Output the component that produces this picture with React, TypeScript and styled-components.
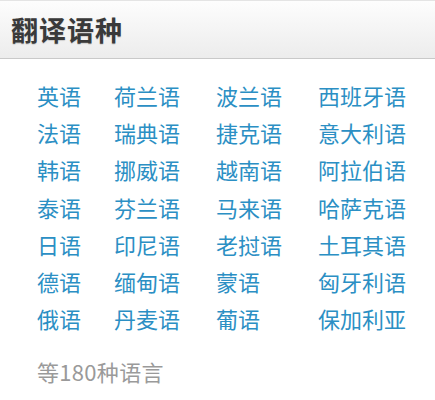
import React from "react";
import styled, { createGlobalStyle } from "styled-components";

const Global = createGlobalStyle`
  html, body { margin: 0; padding: 0; background: #fff; }
  body { font-family: "Noto Sans CJK SC", "Noto Sans", sans-serif; }
`;

const Page = styled.div`
  width: 435px;
  height: 400px;
  background: #fff;
  overflow: hidden;
`;

const Header = styled.div`
  height: 59px;
  box-sizing: border-box;
  display: flex;
  align-items: center;
  padding-left: 11px;
  background: linear-gradient(#fdfdfd, #ececec);
  border-top: 1px solid #e4e4e4;
  border-bottom: 1px solid #c9c9c9;
`;

const Title = styled.h1`
  margin: 0;
  font-size: 27px;
  font-weight: 700;
  color: #3a3a3a;
  letter-spacing: 1px;
  text-shadow: 0 1px 1px rgba(0,0,0,0.15);
`;

const Body = styled.div`
  padding: 17px 0 0 37px;
`;

const Grid = styled.div`
  display: grid;
  grid-template-columns: 77px 102px 102px auto;
  grid-auto-rows: 37.3px;
  align-items: center;
`;

const Lang = styled.span`
  font-size: 22px;
  color: #2b8fc4;
  line-height: 1;
  white-space: nowrap;
`;

const Footer = styled.div`
  margin-top: 16px;
  font-size: 22px;
  line-height: 37px;
  color: #9a9a9a;
  letter-spacing: 0.3px;
`;

const langs = [
  "英语", "荷兰语", "波兰语", "西班牙语",
  "法语", "瑞典语", "捷克语", "意大利语",
  "韩语", "挪威语", "越南语", "阿拉伯语",
  "泰语", "芬兰语", "马来语", "哈萨克语",
  "日语", "印尼语", "老挝语", "土耳其语",
  "德语", "缅甸语", "蒙语", "匈牙利语",
  "俄语", "丹麦语", "葡语", "保加利亚",
];

export default function App() {
  return (
    <Page>
      <Global />
      <Header>
        <Title>翻译语种</Title>
      </Header>
      <Body>
        <Grid>
          {langs.map((l) => (
            <Lang key={l}>{l}</Lang>
          ))}
        </Grid>
        <Footer>等180种语言</Footer>
      </Body>
    </Page>
  );
}
